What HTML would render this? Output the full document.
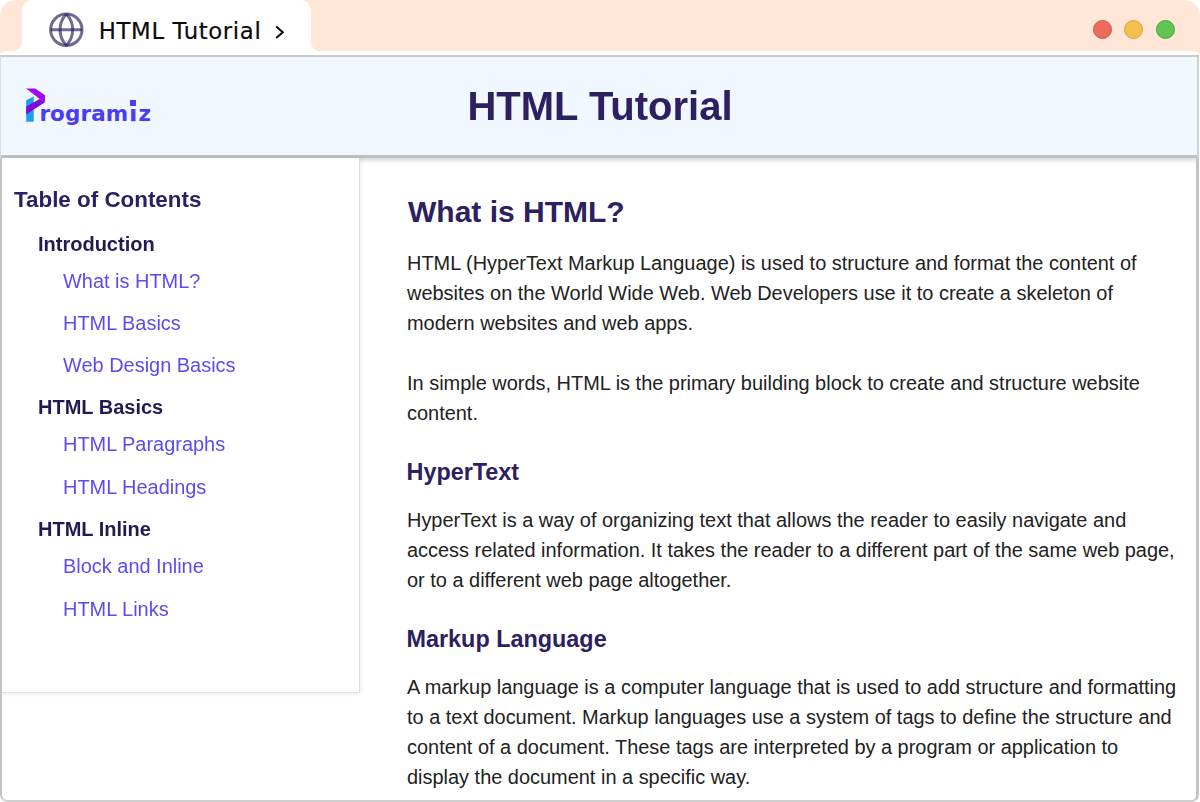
<!DOCTYPE html>
<html lang="en">
<head>
<meta charset="utf-8">
<title>HTML Tutorial</title>
<style>
  html, body { margin: 0; padding: 0; }
  body {
    width: 1200px; height: 802px; overflow: hidden; position: relative;
    background: #ffffff;
    font-family: "Liberation Sans", Arial, sans-serif;
    color: #222;
    filter: blur(0.45px);
  }
  /* ---------- browser chrome ---------- */
  .chrome {
    position: absolute; left: 0; top: 0; width: 1200px; height: 53px;
    background: #ffe6d6;
    border-radius: 16px 16px 0 0;
  }
  .page-top {
    position: absolute; left: 0; top: 51px; width: 1200px; height: 8px;
    background: #fff; border-radius: 7px 7px 0 0;
  }
  .tab {
    position: absolute; left: 22px; top: 0; width: 289px; height: 53px;
    background: #fff; border-radius: 10px 10px 0 0;
  }
  .tab:before, .tab:after {
    content: ""; position: absolute; bottom: 2px; width: 9px; height: 9px;
  }
  .tab:before { left: -9px; background: radial-gradient(circle at 0 0, rgba(255,255,255,0) 8.5px, #fff 9.5px); }
  .tab:after { right: -9px; background: radial-gradient(circle at 100% 0, rgba(255,255,255,0) 8.5px, #fff 9.5px); }
  .globe { position: absolute; left: 26px; top: 11.3px; width: 38px; height: 38px; }
  .tab-title {
    position: absolute; left: 76.8px; top: 16px; white-space: nowrap; letter-spacing: 0.62px; -webkit-text-stroke: 0.2px #0b0b0b;
    font-family: "DejaVu Sans", "Liberation Sans", sans-serif;
    font-size: 22.8px; line-height: 30px; color: #0b0b0b;
  }
  .chev { position: absolute; left: 250px; top: 22px; width: 16px; height: 20px; }
  .dot { position: absolute; top: 20px; width: 17px; height: 17px; border-radius: 50%; border: 1.5px solid; box-sizing: content-box; }
  .dot.r { left: 1092.7px; background: #ed6a5e; border-color: #d4524a; }
  .dot.y { left: 1124px; background: #f5bf4f; border-color: #d9a23d; }
  .dot.g { left: 1156px; background: #61c554; border-color: #45a53a; }

  /* ---------- page frame ---------- */
  .frame {
    position: absolute; left: 0; top: 55px; width: 1199px; height: 747px;
    border-radius: 0 0 7px 7px;
    background: #fff; overflow: hidden;
  }
  .frame .b1 {
    position: absolute; left: 0; top: 0; right: 0; height: 103px; box-sizing: border-box;
    border-style: solid; border-width: 2px 2px 0 1px;
    border-color: #c9c9c9 #cdd0d3 transparent #dce0e3; z-index: 6;
  }
  .frame .b2 {
    position: absolute; left: 0; top: 103px; right: 0; bottom: 0; box-sizing: border-box;
    border-style: solid; border-width: 0 3px 2.5px 2px; border-color: #c4c4c4 #c4c4c4 #cfcfcf #c4c4c4;
    border-radius: 0 0 7px 7px; z-index: 6;
  }
  header {
    position: absolute; left: 0; top: 2px; width: 1199px; height: 98px;
    background: #f0f7ff;
    border-bottom: 3px solid #bcc0c2;
    box-shadow: 0 1px 6px rgba(0,0,0,0.24);
    z-index: 1;
  }
  .logo { position: absolute; left: 23px; top: 29px; width: 22px; height: 36px; }
  .logo-text {
    position: absolute; left: 39.4px; top: 42px; white-space: nowrap;
    font-family: "DejaVu Sans", "Liberation Sans", sans-serif; font-weight: bold;
    font-size: 21.5px; line-height: 30px; letter-spacing: 0.1px; color: #4a3cf0;
  }
  .li { position: relative; display: inline-block; margin: 0 1.6px 0 1.1px; -webkit-text-stroke: 0.5px #4a3cf0; }
  .li:before { content: ""; position: absolute; left: -1px; right: -1px; top: 4px; height: 5.6px; background: #f0f7ff; }
  .li:after { content: ""; position: absolute; left: 0.7px; width: 6.2px; top: 1.2px; height: 5.5px; background: #4a3cf0; }
  header h1 {
    position: absolute; left: 3px; top: 26px; margin: 0; width: 1194px; text-align: center;
    font-size: 40px; line-height: 46px; font-weight: bold; color: #2c2060;
  }
  aside {
    position: absolute; left: 0; top: 103px; width: 359px; height: 533.5px;
    background: #fff; border-right: 1.5px solid #dcdcdc; border-bottom: 1.5px solid #e2e2e2;
    box-shadow: 1px 1px 4px rgba(0,0,0,0.08);
    z-index: 2;
  }
  aside h3 { position: absolute; left: 14px; margin: 0; font-size: 22.4px; line-height: 26px; color: #2c2060; white-space: nowrap; }
  aside h4 { position: absolute; left: 38px; margin: 0; font-size: 20px; line-height: 24px; color: #241a52; white-space: nowrap; }
  aside a { position: absolute; left: 63px; font-size: 19.94px; line-height: 24px; color: #5b4bf2; text-decoration: none; white-space: nowrap; }
  main { position: absolute; left: 408px; top: 103px; width: 780px; }
  main h2 { margin: 0; font-size: 30px; line-height: 36px; color: #2c2060; position: absolute; left: 0; white-space: nowrap; }
  main h3 { margin: 0; font-size: 23.4px; line-height: 28px; color: #2c2060; position: absolute; left: -1.5px; white-space: nowrap; }
  main p { margin: 0; font-size: 19.94px; line-height: 30px; color: #222; position: absolute; left: -1px; width: 785px; white-space: nowrap; }
</style>
</head>
<body>
  <div class="chrome"></div>
  <div class="page-top"></div>
  <div class="tab">
    <svg class="globe" viewBox="0 0 38 38" fill="none" stroke="#25265e" stroke-width="3">
      <circle cx="18.35" cy="18.75" r="15.7" stroke-opacity="0.68"/>
      <path d="M18.35 3.05 A22.7 22.7 0 0 0 18.35 34.45" stroke-opacity="0.68"/>
      <path d="M18.35 3.05 A22.7 22.7 0 0 1 18.35 34.45" stroke-opacity="0.68"/>
      <line x1="2.65" y1="18.75" x2="34.05" y2="18.75" stroke-opacity="0.68"/>
    </svg>
    <div class="tab-title">HTML Tutorial</div>
    <svg class="chev" viewBox="0 0 16 20" fill="none" stroke="#0b0b0b" stroke-width="2"><path d="M4.2 4.4 L10.8 10.2 L4.2 16"/></svg>
  </div>
  <div class="dot r"></div><div class="dot y"></div><div class="dot g"></div>

  <div class="frame">
    <div class="b1"></div><div class="b2"></div>
    <header>
      <svg class="logo" viewBox="23 86 22 36">
        <polygon points="26.2,100.2 33.7,96.6 33.7,121.7 26.2,121.7" fill="#1b9df0"/>
        <polygon points="26.2,88.5 35.2,88.5 45.05,95.3 45.05,102.3 39.65,98.9" fill="#a406f4"/>
        <polygon points="39.65,98.9 45.05,102.3 26.2,114.4 26.2,106.5" fill="#7e0ad8"/>
      </svg>
      <div class="logo-text">rogram<span class="li">i</span>z</div>
      <h1>HTML Tutorial</h1>
    </header>
    <aside>
      <h3 style="top:29px">Table of Contents</h3>
      <h4 style="top:74px">Introduction</h4>
      <a style="top:111px">What is HTML?</a>
      <a style="top:153px">HTML Basics</a>
      <a style="top:195px">Web Design Basics</a>
      <h4 style="top:237px">HTML Basics</h4>
      <a style="top:274px">HTML Paragraphs</a>
      <a style="top:317px">HTML Headings</a>
      <h4 style="top:359px">HTML Inline</h4>
      <a style="top:396px">Block and Inline</a>
      <a style="top:439px">HTML Links</a>
    </aside>
    <main>
      <h2 style="top:35.5px">What is HTML?</h2>
      <p style="top:90px">HTML (HyperText Markup Language) is used to structure and format the content of<br>websites on the World Wide Web. Web Developers use it to create a skeleton of<br>modern websites and web apps.</p>
      <p style="top:210px">In simple words, HTML is the primary building block to create and structure website<br>content.</p>
      <h3 style="top:300px">HyperText</h3>
      <p style="top:347px">HyperText is a way of organizing text that allows the reader to easily navigate and<br>access related information. It takes the reader to a different part of the same web page,<br>or to a different web page altogether.</p>
      <h3 style="top:467px">Markup Language</h3>
      <p style="top:514px">A markup language is a computer language that is used to add structure and formatting<br>to a text document. Markup languages use a system of tags to define the structure and<br>content of a document. These tags are interpreted by a program or application to<br>display the document in a specific way.</p>
    </main>
  </div>
</body>
</html>
